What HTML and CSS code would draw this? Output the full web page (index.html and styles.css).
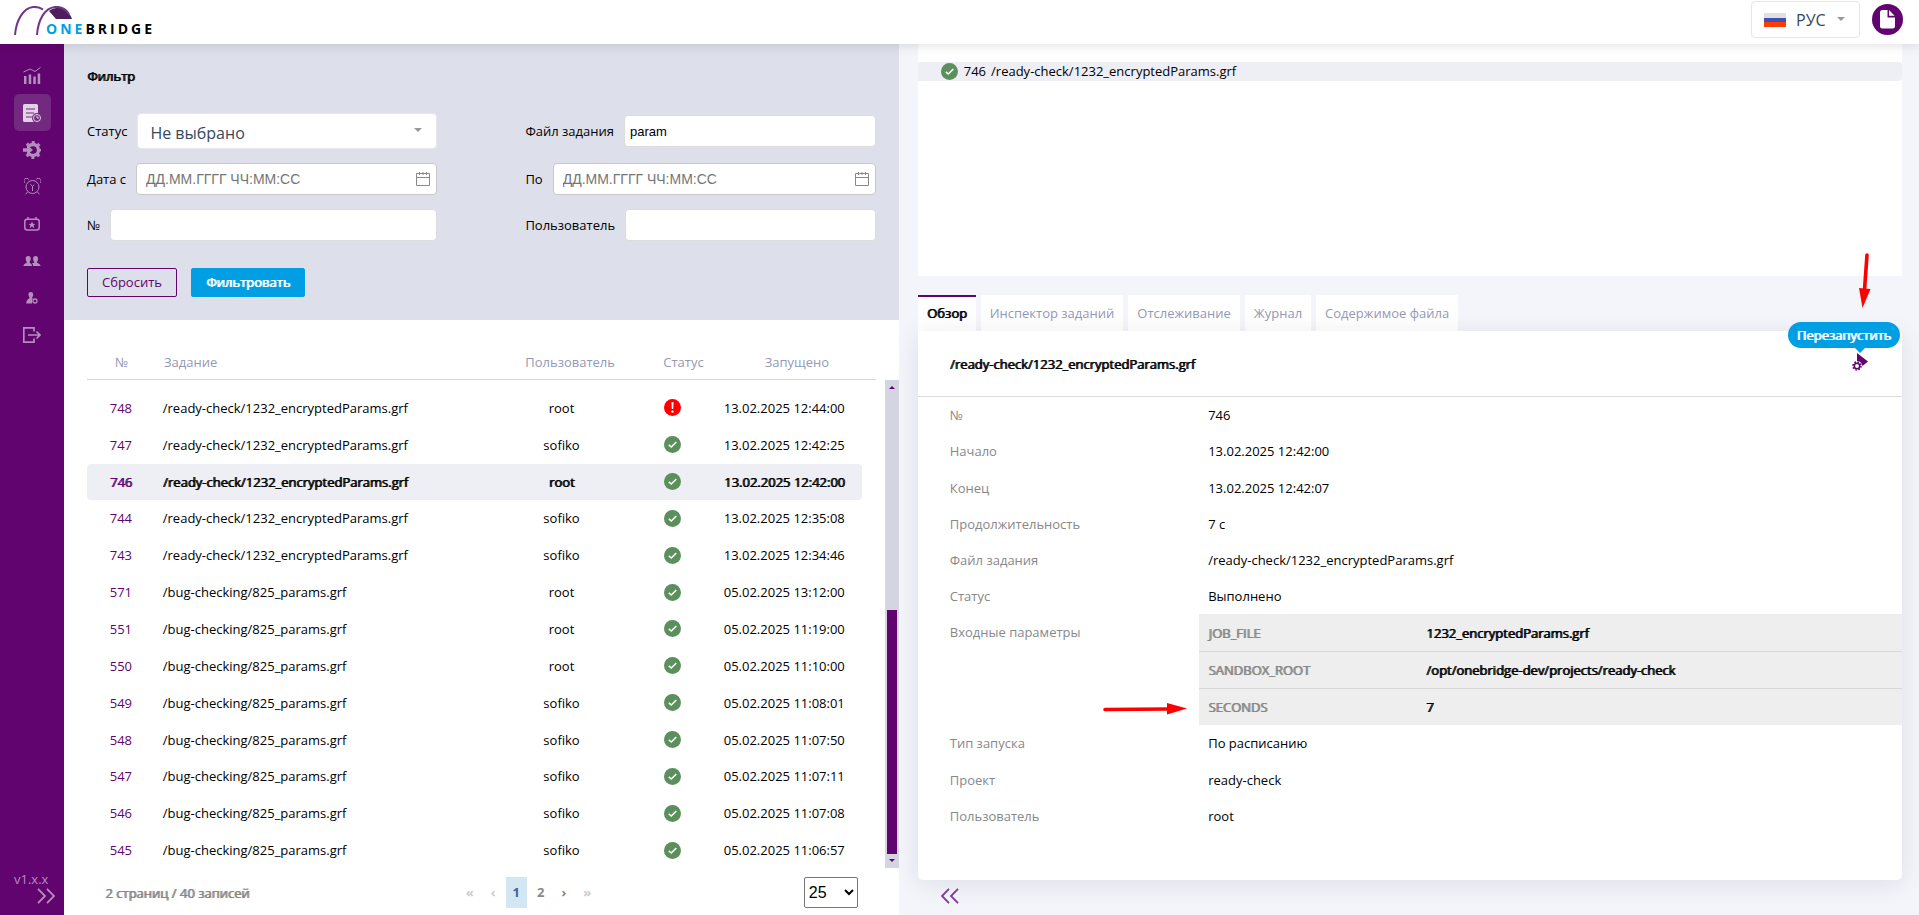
FILE: index.html
```html
<!DOCTYPE html>
<html lang="ru">
<head>
    <meta charset="UTF-8">
    <meta name="viewport" content="width=device-width, initial-scale=1.0">
    <title>OneBridge</title>
    <link rel="stylesheet" href="styles.css">
</head>
<body>
    <!-- Shared icons -->
    <svg class="sprite" aria-hidden="true">
        <symbol id="ok" viewBox="0 0 17 17">
            <circle cx="8.5" cy="8.5" r="8.5" fill="#5b8f5b"/>
            <path d="M4.8 8.8l2.5 2.2 5-5" fill="none" stroke="#fff" stroke-width="1.6"/>
        </symbol>
        <symbol id="error" viewBox="0 0 17 17">
            <circle cx="8.5" cy="8.5" r="8.5" fill="#f00"/>
            <path d="M7.4 3.2h2.2l-.4 6.8H7.8z" fill="#fff"/>
            <circle cx="8.5" cy="12.6" r="1.2" fill="#fff"/>
        </symbol>
        <symbol id="calendar" viewBox="0 0 14 14">
            <path d="M.5 1.500h13v12H.5zM.5 5.500h13M3.500 0v3M7 0v3M10.500 0v3" fill="none" stroke="#8a8a8a"/>
        </symbol>
        <symbol id="caret" viewBox="0 0 8 4">
            <path d="M0 0h8L4 4z" fill="#999"/>
        </symbol>
        <symbol id="chevrons" viewBox="0 0 18 16">
            <path d="M1 .8l7 7.200-7 7.200M10 .8l7 7.200-7 7.200" fill="none" stroke="currentColor" stroke-width="1.800"/>
        </symbol>
    </svg>

    <header class="header">
        <a class="logo" href="#" aria-label="OneBridge">
            <svg class="logo-mark" width="60" height="30" viewBox="0 0 60 30" aria-hidden="true">
                <path d="M35 5C40 2 46 .5 50 3.500c4 2.500 7 5.500 8 9.500H42z" fill="#4c1f5c"/>
                <path d="M1 29C2 15 9 2 19 1c4-.3 7 .5 10 2.500" fill="none" stroke="#74348a" stroke-width="2"/>
                <path d="M23 29C24 15 30 2 41 1c6-.5 11 2 14 7" fill="none" stroke="#74348a" stroke-width="2"/>
            </svg>
            <span class="logo-text"><span class="logo-one">ONE</span>BRIDGE</span>
        </a>
        <div class="header-tools">
            <label class="lang">
                <svg width="22" height="14" viewBox="0 0 22 14" aria-hidden="true">
                    <path d="M0 0h22v5H0z" fill="#e0e0e0"/>
                    <path d="M0 5h22v4H0z" fill="#3f51b5"/>
                    <path d="M0 9h22v5H0z" fill="#ff3d00"/>
                </svg>
                <select class="lang-select" aria-label="Язык">
                    <option>РУС</option>
                </select>
                <svg class="lang-caret" width="8" height="4"><use href="#caret"/></svg>
            </label>
            <button class="doc-button" type="button" aria-label="Документация">
                <svg width="15" height="19" viewBox="0 0 15 19">
                    <path d="M2.500 0h5v7.500H15V16a2.500 2.500 0 0 1-2.500 2.500h-10A2.500 2.500 0 0 1 0 16V2.500A2.500 2.500 0 0 1 2.500 0z" fill="#fff"/>
                    <path d="M9 0l5.600 5.800H9z" fill="#fff"/>
                </svg>
            </button>
        </div>
    </header>

    <div class="layout">
        <aside class="sidebar">
            <nav class="menu">
                <a href="#" aria-label="Мониторинг">
                    <svg width="18" height="18" viewBox="0 0 18 18" fill="currentColor">
                        <path d="M1 9h2.500v8H1zM5.700 7.500h2.500V17H5.700zM10.300 9.500h2.500V17h-2.500zM14.700 6.500h2.500V17h-2.500z"/>
                        <path d="M.5 5L7 2l5 2.500L17.500.5" fill="none" stroke="currentColor"/>
                    </svg>
                </a>
                <a class="active" href="#" aria-label="Журнал заданий">
                    <svg width="18" height="18" viewBox="0 0 18 18">
                        <path d="M1.500 0h12A1.500 1.500 0 0 1 15 1.500V18H1.500A1.500 1.500 0 0 1 0 16.500v-15A1.500 1.500 0 0 1 1.500 0z" fill="#e2d2e6"/>
                        <path d="M3 5h9M3 9h8M3 13h6" stroke="#73297f" stroke-width="1.200"/>
                        <circle cx="14" cy="14" r="5" fill="#73297f"/>
                        <circle cx="14" cy="14" r="3.500" fill="#73297f" stroke="#e2d2e6"/>
                        <path d="M14 11.800V14h2" fill="none" stroke="#e2d2e6"/>
                    </svg>
                </a>
                <a href="#" aria-label="Запуск">
                    <svg width="18" height="18" viewBox="0 0 18 18">
                        <circle cx="10" cy="9" r="5.500" fill="none" stroke="currentColor" stroke-width="3.400"/>
                        <circle cx="10" cy="9" r="7.800" fill="none" stroke="currentColor" stroke-width="2.200" stroke-dasharray="3.060 3.060" stroke-dashoffset="1.530"/>
                        <path d="M0 5.500h4v7H0z" fill="#62046f"/>
                        <path d="M0 7.300h5V4.800L10 9l-5 4.200v-2.500H0z" fill="currentColor"/>
                    </svg>
                </a>
                <a href="#" aria-label="Расписание">
                    <svg width="17" height="17" viewBox="0 0 17 17" fill="none" stroke="currentColor">
                        <circle cx="8.500" cy="9" r="6.500"/>
                        <path d="M.8 4.800a2.600 2.600 0 1 1 4-3.200M16.200 4.800a2.600 2.600 0 1 0-4-3.200M3.800 13.800L1.500 16.300M13.200 13.800l2.300 2.500M6.200 6l2.300 2.300L10.200 6.700M8.500 8.300V13"/>
                    </svg>
                </a>
                <a href="#" aria-label="События">
                    <svg width="16" height="14" viewBox="0 0 16 14">
                        <rect x=".8" y="2.300" width="14.400" height="10.700" rx="2.500" fill="none" stroke="currentColor" stroke-width="1.500"/>
                        <path d="M4 0v3M12 0v3" stroke="currentColor" stroke-width="1.500"/>
                        <path d="M8 4.500l1 2.200 2.300.2-1.700 1.600.5 2.400L8 9.700l-2.100 1.200.5-2.400-1.700-1.600 2.300-.2z" fill="currentColor"/>
                    </svg>
                </a>
                <a href="#" aria-label="Пользователи">
                    <svg width="18" height="10" viewBox="0 0 18 10" fill="currentColor">
                        <path d="M5.200 0c1.800 0 2.700 1.300 2.500 3-.1 1.300-.6 2.200-1 2.700v1C7.300 7.500 9 7.500 9 10H.5C.5 7.700 3 7.500 3.700 6.700v-1c-.5-.5-.9-1.400-1-2.700C2.500 1.300 3.400 0 5.200 0z"/>
                        <path d="M12.600 0c1.800 0 2.700 1.300 2.500 3-.1 1.300-.6 2.200-1 2.700v1c.7.800 3.400 1 3.400 3.300H10c0-1.800-.5-2.300-1.200-2.900.8-.3 1.800-.1 2.300-.4v-1c-.5-.5-.9-1.400-1-2.700-.2-1.700.7-3 2.500-3z"/>
                    </svg>
                </a>
                <a href="#" aria-label="Роли">
                    <svg width="12" height="12" viewBox="0 0 12 12" fill="currentColor">
                        <path d="M4.800 0c1.700 0 2.500 1.200 2.400 2.700 0 1.200-.5 2-1 2.500v1L7 6.500 6 11.500H.3C.3 7.500 2.700 7 3.400 6.200v-1c-.5-.5-.9-1.300-1-2.500C2.300 1.200 3.100 0 4.800 0z"/>
                        <circle cx="9" cy="9" r="3" fill="#62046f"/>
                        <circle cx="9" cy="9" r="2" fill="none" stroke="currentColor" stroke-width="1.300"/>
                    </svg>
                </a>
                <a href="#" aria-label="Выход">
                    <svg width="18" height="16" viewBox="0 0 18 16" fill="none" stroke="currentColor" stroke-width="1.700">
                        <path d="M11 4.500V.8H.8v14.400H11v-3.700M5 8h12M13.500 4.500L17 8l-3.500 3.500"/>
                    </svg>
                </a>
            </nav>
            <div class="sidebar-footer">
                <span>v1.x.x</span>
                <button class="expand" type="button" aria-label="Развернуть меню">
                    <svg width="18" height="16"><use href="#chevrons"/></svg>
                </button>
            </div>
        </aside>

        <main class="jobs">
            <form class="filter">
                <h2>Фильтр</h2>
                <div class="filter-grid">
                    <div class="field">
                        <label for="status">Статус</label>
                        <div class="select-wrap">
                            <select id="status">
                                <option>Не выбрано</option>
                            </select>
                            <svg width="8" height="4"><use href="#caret"/></svg>
                        </div>
                    </div>
                    <div class="field">
                        <label for="jobFile">Файл задания</label>
                        <input type="text" id="jobFile" value="param">
                    </div>
                    <div class="field">
                        <label for="dateFrom">Дата с</label>
                        <div class="date-wrap">
                            <input type="text" id="dateFrom" placeholder="ДД.ММ.ГГГГ ЧЧ:ММ:СС">
                            <svg width="14" height="14"><use href="#calendar"/></svg>
                        </div>
                    </div>
                    <div class="field">
                        <label for="dateTo">По</label>
                        <div class="date-wrap">
                            <input type="text" id="dateTo" placeholder="ДД.ММ.ГГГГ ЧЧ:ММ:СС">
                            <svg width="14" height="14"><use href="#calendar"/></svg>
                        </div>
                    </div>
                    <div class="field">
                        <label for="number">№</label>
                        <input type="text" id="number">
                    </div>
                    <div class="field">
                        <label for="user">Пользователь</label>
                        <input type="text" id="user">
                    </div>
                </div>
                <div class="filter-buttons">
                    <button class="btn btn-outline" type="reset">Сбросить</button>
                    <button class="btn btn-primary" type="button">Фильтровать</button>
                </div>
            </form>

            <div class="table-area">
                <table class="jobs-table">
                    <thead>
                        <tr><th>№</th><th>Задание</th><th>Пользователь</th><th>Статус</th><th>Запущено</th></tr>
                    </thead>
                    <tbody>
                        <tr><td>748</td><td>/ready-check/1232_encryptedParams.grf</td><td>root</td><td><svg width="17" height="17"><use href="#error"/></svg></td><td>13.02.2025 12:44:00</td></tr>
                        <tr><td>747</td><td>/ready-check/1232_encryptedParams.grf</td><td>sofiko</td><td><svg width="17" height="17"><use href="#ok"/></svg></td><td>13.02.2025 12:42:25</td></tr>
                        <tr class="selected"><td>746</td><td>/ready-check/1232_encryptedParams.grf</td><td>root</td><td><svg width="17" height="17"><use href="#ok"/></svg></td><td>13.02.2025 12:42:00</td></tr>
                        <tr><td>744</td><td>/ready-check/1232_encryptedParams.grf</td><td>sofiko</td><td><svg width="17" height="17"><use href="#ok"/></svg></td><td>13.02.2025 12:35:08</td></tr>
                        <tr><td>743</td><td>/ready-check/1232_encryptedParams.grf</td><td>sofiko</td><td><svg width="17" height="17"><use href="#ok"/></svg></td><td>13.02.2025 12:34:46</td></tr>
                        <tr><td>571</td><td>/bug-checking/825_params.grf</td><td>root</td><td><svg width="17" height="17"><use href="#ok"/></svg></td><td>05.02.2025 13:12:00</td></tr>
                        <tr><td>551</td><td>/bug-checking/825_params.grf</td><td>root</td><td><svg width="17" height="17"><use href="#ok"/></svg></td><td>05.02.2025 11:19:00</td></tr>
                        <tr><td>550</td><td>/bug-checking/825_params.grf</td><td>root</td><td><svg width="17" height="17"><use href="#ok"/></svg></td><td>05.02.2025 11:10:00</td></tr>
                        <tr><td>549</td><td>/bug-checking/825_params.grf</td><td>sofiko</td><td><svg width="17" height="17"><use href="#ok"/></svg></td><td>05.02.2025 11:08:01</td></tr>
                        <tr><td>548</td><td>/bug-checking/825_params.grf</td><td>sofiko</td><td><svg width="17" height="17"><use href="#ok"/></svg></td><td>05.02.2025 11:07:50</td></tr>
                        <tr><td>547</td><td>/bug-checking/825_params.grf</td><td>sofiko</td><td><svg width="17" height="17"><use href="#ok"/></svg></td><td>05.02.2025 11:07:11</td></tr>
                        <tr><td>546</td><td>/bug-checking/825_params.grf</td><td>sofiko</td><td><svg width="17" height="17"><use href="#ok"/></svg></td><td>05.02.2025 11:07:08</td></tr>
                        <tr><td>545</td><td>/bug-checking/825_params.grf</td><td>sofiko</td><td><svg width="17" height="17"><use href="#ok"/></svg></td><td>05.02.2025 11:06:57</td></tr>
                    </tbody>
                </table>
                <div class="scrollbar" aria-hidden="true">
                    <svg width="6" height="3" viewBox="0 0 6 3"><path d="M0 3h6L3 0z"/></svg>
                    <div class="scroll-track"><div class="scroll-thumb"></div></div>
                    <svg width="6" height="3" viewBox="0 0 6 3"><path d="M0 0h6L3 3z"/></svg>
                </div>
            </div>

            <footer class="table-footer">
                <span class="total">2 страниц / 40 записей</span>
                <nav class="pages" aria-label="Страницы">
                    <a class="disabled" href="#">«</a>
                    <a class="disabled" href="#">‹</a>
                    <a class="current" href="#">1</a>
                    <a href="#">2</a>
                    <a href="#">›</a>
                    <a class="disabled" href="#">»</a>
                </nav>
                <select class="page-size" aria-label="Записей на странице">
                    <option>25</option>
                </select>
            </footer>
        </main>

        <section class="details">
            <div class="tree">
                <div class="tree-row">
                    <svg width="17" height="17"><use href="#ok"/></svg>
                    <span>746</span>
                    <span>/ready-check/1232_encryptedParams.grf</span>
                </div>
            </div>

            <div class="tabs" role="tablist">
                <button class="tab active" type="button" role="tab">Обзор</button>
                <button class="tab" type="button" role="tab">Инспектор заданий</button>
                <button class="tab" type="button" role="tab">Отслеживание</button>
                <button class="tab" type="button" role="tab">Журнал</button>
                <button class="tab" type="button" role="tab">Содержимое файла</button>
            </div>

            <div class="card">
                <div class="card-head">
                    <h3>/ready-check/1232_encryptedParams.grf</h3>
                    <div class="restart">
                        <span class="tooltip" id="restartTip">Перезапустить</span>
                        <button type="button" aria-labelledby="restartTip">
                            <svg width="16" height="18" viewBox="0 0 16 18">
                                <path d="M5 0l11 8.500-5.500 4.500C10 10 8 8 5 8z" fill="#62046f"/>
                                <circle cx="5" cy="13" r="2.700" fill="none" stroke="#62046f" stroke-width="1.600"/>
                                <circle cx="5" cy="13" r="4" fill="none" stroke="#62046f" stroke-width="1.600" stroke-dasharray="1.570 1.570"/>
                            </svg>
                        </button>
                        <svg class="pointer pointer-down" width="14" height="56" viewBox="0 0 14 56" aria-hidden="true">
                            <path d="M9 2L6.500 37" stroke="#f00" stroke-width="3.600" stroke-linecap="round"/>
                            <path d="M1 35l11.500 1L4.500 55z" fill="#f00"/>
                        </svg>
                    </div>
                </div>
                <dl class="props">
                    <div class="prop"><dt>№</dt><dd>746</dd></div>
                    <div class="prop"><dt>Начало</dt><dd>13.02.2025 12:42:00</dd></div>
                    <div class="prop"><dt>Конец</dt><dd>13.02.2025 12:42:07</dd></div>
                    <div class="prop"><dt>Продолжительность</dt><dd>7 с</dd></div>
                    <div class="prop"><dt>Файл задания</dt><dd>/ready-check/1232_encryptedParams.grf</dd></div>
                    <div class="prop"><dt>Статус</dt><dd>Выполнено</dd></div>
                    <div class="prop prop-params">
                        <dt>Входные параметры</dt>
                        <dd>
                            <table class="params">
                                <tr><th>JOB_FILE</th><td>1232_encryptedParams.grf</td></tr>
                                <tr><th>SANDBOX_ROOT</th><td>/opt/onebridge-dev/projects/ready-check</td></tr>
                                <tr><th>SECONDS</th><td>7</td></tr>
                            </table>
                            <svg class="pointer pointer-right" width="84" height="14" viewBox="0 0 84 14" aria-hidden="true">
                                <path d="M2 7.500L66 7" stroke="#f00" stroke-width="3.600" stroke-linecap="round"/>
                                <path d="M64 1l20 5.500-20 6z" fill="#f00"/>
                            </svg>
                        </dd>
                    </div>
                    <div class="prop"><dt>Тип запуска</dt><dd>По расписанию</dd></div>
                    <div class="prop"><dt>Проект</dt><dd>ready-check</dd></div>
                    <div class="prop"><dt>Пользователь</dt><dd>root</dd></div>
                </dl>
            </div>

            <button class="collapse" type="button" aria-label="Скрыть панель">
                <svg width="18" height="16"><use href="#chevrons"/></svg>
            </button>
        </section>
    </div>
</body>
</html>
```
FILE: styles.css
```css
:root {
    --primary-color: #62046f;
    --accent-color: #009fe3;
    --bg-color: #f4f5fa;
    --filter-bg: #dddfea;
    --row-active: #eeeff5;
    --muted: #9499b5;
    --gray: #888;
    --border-color: #d3d5e0;
}

* {
    box-sizing: border-box;
}

body {
    margin: 0;
    min-height: 100vh;
    display: flex;
    flex-direction: column;
    font-family: 'Open Sans', 'Noto Sans', sans-serif;
    font-size: 13px;
    line-height: 18px;
    color: #000;
    background: #fff;
}

a {
    color: inherit;
    text-decoration: none;
}

button {
    font: inherit;
    padding: 0;
    border: none;
    background: none;
    cursor: pointer;
}

svg {
    display: block;
    flex: none;
}

.sprite {
    position: absolute;
    width: 0;
    height: 0;
}

/* Emboldened text keeps the width of the regular face */
h2, h3,
.selected td,
.total,
.tab.active,
.tooltip,
.btn-primary,
.params {
    font-weight: 400;
    text-shadow: 1px 0 currentColor;
}

/* Header */
.header {
    position: relative;
    z-index: 1;
    height: 44px;
    padding: 0 16px 0 14px;
    display: flex;
    justify-content: space-between;
    background: #fff;
    box-shadow: 0 0 12px rgba(0, 0, 0, 0.15);
}

.logo {
    display: flex;
    align-items: flex-end;
    padding-bottom: 8px;
}

.logo-text {
    margin-left: -28px;
    font-size: 14px;
    line-height: 14px;
    font-weight: 700;
    letter-spacing: 3px;
}

.logo-one {
    color: var(--accent-color);
}

.header-tools {
    display: flex;
    align-items: center;
    gap: 12px;
    padding-bottom: 5px;
}

.lang {
    display: flex;
    align-items: center;
    height: 37px;
    padding: 0 14px 0 12px;
    border: 1px solid #e6e6e6;
    border-radius: 4px;
}

.lang-select {
    width: 51px;
    padding: 0 0 0 10px;
    appearance: none;
    border: none;
    background: none;
    font: inherit;
    font-size: 16px;
    line-height: 24px;
    color: #35495e;
}

.lang-caret {
    margin-bottom: 2px;
}

.doc-button {
    display: flex;
    align-items: center;
    justify-content: center;
    width: 31px;
    height: 31px;
    border-radius: 50%;
    background: var(--primary-color);
}

/* Page columns */
.layout {
    flex: 1;
    display: flex;
}

.sidebar {
    flex: none;
    width: 64px;
    padding: 13px 0 11px;
    display: flex;
    flex-direction: column;
    justify-content: space-between;
    background: var(--primary-color);
    color: #b190bb;
}

.menu {
    display: flex;
    flex-direction: column;
    align-items: center;
}

.menu a {
    display: flex;
    align-items: center;
    justify-content: center;
    width: 37px;
    height: 37px;
    border-radius: 5px;
}

.menu a.active {
    background: #73297f;
}

.sidebar-footer {
    display: flex;
    flex-direction: column;
    padding: 0 9px 0 14px;
}

.expand {
    align-self: flex-end;
    color: inherit;
}

.jobs {
    flex: 0 0 calc((100% - 64px) * 0.45);
    display: flex;
    flex-direction: column;
}

/* Filter */
.filter {
    padding: 23px;
    background: var(--filter-bg);
}

h2 {
    margin: 0 0 28px;
    font-size: 13px;
}

.filter-grid {
    display: grid;
    grid-template-columns: 1fr 1fr;
    column-gap: 88px;
    row-gap: 14px;
}

.field {
    display: flex;
    align-items: center;
    gap: 10px;
}

.field input {
    flex: 1;
    min-width: 0;
    width: 100%;
    height: 32px;
    padding: 0 5px;
    border: 1px solid #dcdcdc;
    border-radius: 4px;
    background: #fff;
    font-family: 'Liberation Sans', Arial, sans-serif;
    font-size: 13px;
}

.select-wrap,
.date-wrap {
    flex: 1;
    position: relative;
}

.select-wrap select {
    display: block;
    width: 100%;
    height: 36px;
    padding: 3px 12px 0;
    appearance: none;
    border: 1px solid #e8e8e8;
    border-radius: 4px;
    background: #fff;
    font: inherit;
    font-size: 16px;
    color: #35495e;
}

.select-wrap svg {
    position: absolute;
    right: 15px;
    top: 15px;
}

.date-wrap input {
    display: block;
    padding: 0 9px 1px;
    border-color: #c8c8c8;
    font-size: 14px;
}

.date-wrap input::placeholder {
    color: #757575;
}

.date-wrap svg {
    position: absolute;
    right: 7px;
    top: 9px;
}

.filter-buttons {
    display: flex;
    gap: 14px;
    margin-top: 27px;
}

.btn {
    height: 29px;
    padding: 0 14px 1px;
    border: 1px solid var(--accent-color);
    border-radius: 2px;
}

.btn-outline {
    border-color: var(--primary-color);
    color: var(--primary-color);
}

.btn-primary {
    background: var(--accent-color);
    color: #fff;
}

/* Job list */
.table-area {
    flex: 1;
    display: flex;
    gap: 9px;
    padding-left: 23px;
}

.jobs-table {
    flex: 1;
    display: flex;
    flex-direction: column;
}

.jobs-table tr {
    display: grid;
    grid-template-columns: 35fr 170fr 80fr 35fr 80fr;
    align-items: center;
    text-align: center;
    border-radius: 4px;
}

.jobs-table thead tr {
    height: 60px;
    padding-top: 24px;
    border-bottom: 1px solid var(--border-color);
    border-radius: 0;
}

.jobs-table th {
    padding: 0;
    font-weight: 400;
    color: var(--muted);
}

.jobs-table td {
    padding: 0;
}

.jobs-table th:nth-child(2),
.jobs-table td:nth-child(2) {
    padding-left: 8px;
    text-align: left;
}

.jobs-table td:first-child {
    color: var(--primary-color);
}

.jobs-table td svg {
    margin: 0 auto;
}

.jobs-table tbody {
    flex: 1;
    display: flex;
    flex-direction: column;
    gap: 1px;
    padding: 10px 14px 0 0;
}

.jobs-table tbody tr {
    flex: 1;
}

.jobs-table .selected {
    background: var(--row-active);
}

.scrollbar {
    width: 14px;
    margin-top: 60px;
    padding: 6px 2px;
    display: flex;
    flex-direction: column;
    align-items: center;
    background: var(--border-color);
    fill: var(--primary-color);
}

.scroll-track {
    flex: 1;
    width: 100%;
    margin: 5px 0;
    display: flex;
    flex-direction: column;
    justify-content: flex-end;
}

.scroll-thumb {
    height: 53%;
    background: var(--primary-color);
}

.table-footer {
    display: grid;
    grid-template-columns: 47% 1fr auto;
    align-items: center;
    padding: 9px 41px 7px;
    color: var(--gray);
}

.pages {
    display: flex;
    gap: 3px;
    font-weight: 700;
    line-height: 31px;
}

.pages a {
    padding: 0 7px;
}

.pages .disabled {
    color: #ccc;
}

.pages .current {
    background: #d3e7f3;
    color: #44639f;
}

.page-size {
    width: 54px;
    height: 31px;
    border: 1px solid #767676;
    border-radius: 2px;
    background: #fff;
    font-family: 'Liberation Sans', Arial, sans-serif;
    font-size: 16px;
}

/* Details */
.details {
    flex: 1;
    min-width: 0;
    padding: 0 17px 11px 19px;
    display: flex;
    flex-direction: column;
    background: var(--bg-color);
}

.tree {
    height: 232px;
    padding-top: 18px;
    background: #fff;
}

.tree-row {
    display: flex;
    align-items: center;
    gap: 5px;
    height: 19px;
    padding: 0 0 1px 23px;
    border-radius: 0 4px 4px 0;
    background: var(--row-active);
}

.tree-row svg {
    margin-right: 1px;
}

.tabs {
    display: flex;
    gap: 5px;
    margin-top: 19px;
}

.tab {
    height: 36px;
    padding: 0 9px;
    background: #fff;
    color: var(--muted);
}

.tab.active {
    padding-bottom: 2px;
    border-top: 2px solid var(--primary-color);
    color: #000;
}

.card {
    flex: 1;
    display: flex;
    flex-direction: column;
    border-radius: 0 0 5px 5px;
    background: #fff;
    box-shadow: 0 4px 24px rgba(30, 30, 80, 0.1);
}

.card-head {
    display: flex;
    align-items: center;
    justify-content: space-between;
    height: 66px;
    padding: 0 34px 0 32px;
    border-bottom: 1px solid #dcdcdc;
}

h3 {
    margin: 0;
    font-size: 13px;
}

.restart {
    position: relative;
}

.tooltip {
    position: absolute;
    right: -32px;
    bottom: 27px;
    padding: 4px 9px;
    border-radius: 13px;
    background: var(--accent-color);
    color: #fff;
}

.tooltip::after {
    content: '';
    position: absolute;
    right: 35px;
    top: 100%;
    border: 5px solid transparent;
    border-top-color: var(--accent-color);
    border-bottom: none;
}

.pointer {
    position: absolute;
}

.pointer-down {
    right: -4px;
    bottom: 66px;
}

.props {
    flex: 1;
    margin: 0;
    padding-bottom: 46px;
    display: flex;
    flex-direction: column;
}

.prop {
    flex: 1;
    display: grid;
    grid-template-columns: 29% 1fr;
    align-items: center;
}

.prop dt {
    padding-left: 32px;
    color: var(--gray);
}

.prop dd {
    margin: 0;
    padding-left: 5px;
}

.prop-params {
    flex: none;
    align-items: start;
}

.prop-params dt {
    padding-top: 9px;
}

.prop-params dd {
    position: relative;
    padding: 0;
    margin-left: -4px;
}

.params {
    width: 100%;
    border-collapse: collapse;
    background: #eee;
}

.params tr + tr {
    border-top: 1px solid #d8d8d8;
}

.params th,
.params td {
    height: 37px;
    padding: 0 9px;
    font-weight: 400;
    text-align: left;
}

.params th {
    width: 31%;
    color: var(--gray);
}

.pointer-right {
    right: 100%;
    margin-right: 12px;
    bottom: 9px;
}

.collapse {
    align-self: flex-start;
    margin: 8px 0 0 23px;
    color: #7c3a94;
}

.collapse svg {
    transform: scaleX(-1);
}
```
